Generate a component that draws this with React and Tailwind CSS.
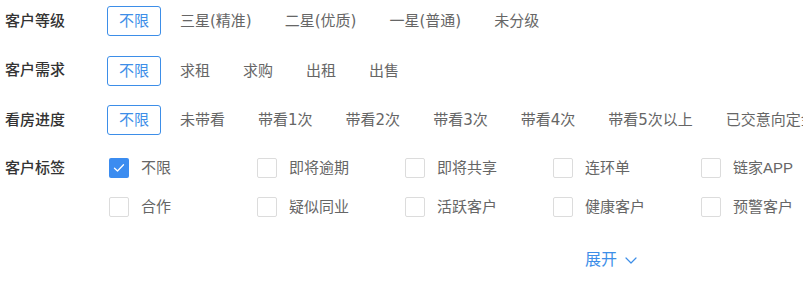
import React, { useState } from 'react';

const rows = [
  { label: '客户等级', options: ['不限', '三星(精准)', '二星(优质)', '一星(普通)', '未分级'] },
  { label: '客户需求', options: ['不限', '求租', '求购', '出租', '出售'] },
  {
    label: '看房进度',
    options: ['不限', '未带看', '带看1次', '带看2次', '带看3次', '带看4次', '带看5次以上', '已交意向定金'],
  },
];

const tags = ['不限', '即将逾期', '即将共享', '连环单', '链家APP', '合作', '疑似同业', '活跃客户', '健康客户', '预警客户'];

function OptionRow({ label, options }) {
  const [active, setActive] = useState(0);
  return (
    <div className="flex items-center h-[30px]">
      <div className="w-[107px] shrink-0 pl-[5px] text-[15px] font-medium text-[#333]">{label}</div>
      <div
        className="flex items-center gap-[19px] whitespace-nowrap"
        style={{ fontFamily: '"DejaVu Sans", "Noto Sans CJK SC", sans-serif' }}
      >
        {options.map((opt, i) => (
          <button
            key={opt}
            onClick={() => setActive(i)}
            className={
              i === active
                ? 'h-[30px] px-[11px] border border-[#3d8ee8] rounded-[3px] text-[15px] leading-[28px] text-[#3d8ee8]'
                : 'h-[30px] pr-[14px] text-[15px] leading-[30px] text-[#666]'
            }
          >
            {opt}
          </button>
        ))}
      </div>
    </div>
  );
}

function Checkbox({ checked }) {
  if (checked) {
    return (
      <span className="w-5 h-5 rounded-[2px] bg-[#3b8cf0] flex items-center justify-center shrink-0">
        <svg width="12" height="10" viewBox="0 0 12 10" fill="none">
          <path d="M1.5 5.2 L4.5 8 L10.5 1.8" stroke="#fff" strokeWidth="1.3" strokeLinecap="round" strokeLinejoin="round" />
        </svg>
      </span>
    );
  }
  return <span className="w-5 h-5 rounded-[2px] border border-[#dcdcdc] bg-white shrink-0" />;
}

export default function App() {
  const [checked, setChecked] = useState([0]);

  const toggle = (i) => {
    setChecked((c) => (c.includes(i) ? c.filter((x) => x !== i) : [...c, i]));
  };

  return (
    <div
      className="w-[803px] h-[297px] overflow-hidden bg-white pt-[6px]"
      style={{ fontFamily: '"Liberation Sans", "Noto Sans CJK SC", sans-serif' }}
    >
      <div className="flex flex-col gap-[19.5px]">
        {rows.map((r) => (
          <OptionRow key={r.label} label={r.label} options={r.options} />
        ))}
      </div>

      <div className="flex mt-[23px]">
        <div className="w-[107px] shrink-0 pl-[5px] text-[15px] font-medium text-[#333] leading-[22px] mt-[-1px]">
          客户标签
        </div>
        <div className="grid grid-cols-[repeat(5,148px)] gap-y-[19px] pl-[2px]">
          {tags.map((t, i) => (
            <label key={t} className="flex items-center gap-3 h-5 cursor-pointer whitespace-nowrap" onClick={() => toggle(i)}>
              <Checkbox checked={checked.includes(i)} />
              <span className="text-[15px] text-[#666]">{t}</span>
            </label>
          ))}
        </div>
      </div>

      <div className="flex mt-[32px] pl-[585px]">
        <button className="flex items-center gap-[8px] text-[16px] text-[#3d8ee8] leading-[22px]">
          展开
          <svg width="12" height="7" viewBox="0 0 12 7" fill="none">
            <path d="M1 1 L6 6 L11 1" stroke="#3d8ee8" strokeWidth="1.2" strokeLinecap="round" strokeLinejoin="round" />
          </svg>
        </button>
      </div>
    </div>
  );
}
